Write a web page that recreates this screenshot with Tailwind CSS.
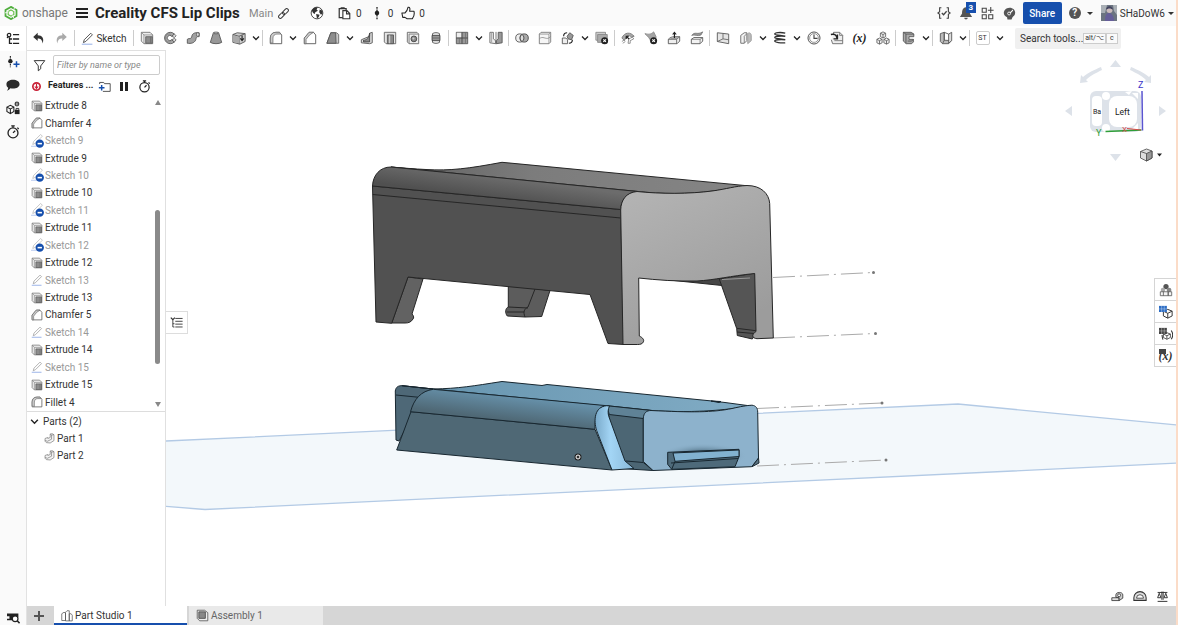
<!DOCTYPE html>
<html lang="en">
<head>
  <meta charset="utf-8">
  <title>Creality CFS Lip Clips | Part Studio 1</title>
  <script src="https://cdn.jsdelivr.net/npm/@tailwindcss/browser@4"></script>
</head>
<body class="h-screen flex flex-col overflow-hidden bg-white border-r-2 border-[#fbdcc8] font-['Roboto',sans-serif] text-[10px] text-[#333]">

  <!-- icon sprite, 16x16 grid -->
  <svg class="hidden" xmlns="http://www.w3.org/2000/svg">
    <defs>
      <g id="g-pencil" fill="none" stroke="currentColor"><path d="M3 13l1-3.500L12 1.500l2 2L6 11.500z"/><path d="M1 15h13" stroke="#7b9be0"/></g>
    </defs>
    <symbol id="chev" viewBox="0 0 16 16"><path d="M2 5l6 6 6-6" fill="none" stroke="#222" stroke-width="2.500"/></symbol>
    <symbol id="undo" viewBox="0 0 16 16"><path d="M7 1L1.500 6 7 11V8c3.500 0 5.500 1.500 6 6C15.500 8 12.500 4 7 4z" fill="#333"/></symbol>
    <symbol id="redo" viewBox="0 0 16 16"><path d="M9 1l5.500 5L9 11V8c-3.500 0-5.500 1.500-6 6C.5 8 3.500 4 9 4z" fill="#aaa"/></symbol>
    <symbol id="sketch" viewBox="0 0 16 16"><use href="#g-pencil"/></symbol>
    <symbol id="suppressed" viewBox="0 0 16 16"><g opacity=".6"><use href="#g-pencil" x="-1" y="-1"/></g><circle cx="10" cy="11" r="4.800" fill="#164fad"/><path d="M7.500 11h5" stroke="#fff" stroke-width="1.800"/></symbol>
    <symbol id="extrude" viewBox="0 0 16 16"><g stroke-width=".9"><path d="M1.500 1.500h10l3 3v10h-10l-3-3z" fill="#eee" stroke="#666"/><path d="M1.500 1.500l3 3h10M4.500 4.500v10" fill="none" stroke="#888"/><path d="M6.500 6.500h7.500v7.500H6.500z" fill="#8c8c8c" stroke="#555"/><path d="M12 6.500V14" fill="none" stroke="#6c6c6c"/></g></symbol>
    <symbol id="revolve" viewBox="0 0 16 16"><path d="M13 3.500A6.500 6.500 0 1 0 13 12.500L10 10A3 3 0 1 1 10 6z" fill="#aaa" stroke="#555"/><path d="M10 6l3-2.500 2 2L13 7.500zM10 10l3-1.500 2 1.500-2 2.500z" fill="#ddd" stroke="#444" stroke-width=".8"/><circle cx="7.500" cy="8" r="4.600" fill="none" stroke="#777" stroke-width=".7" stroke-dasharray="18 11" stroke-dashoffset="-5"/></symbol>
    <symbol id="sweep" viewBox="0 0 16 16"><path d="M1.500 9.500C4 7.500 5 10 6.500 7 7 3 9 1.500 15 2v4.500c-4-.5-3 1.500-4 4C9 14 6 14.500 1.500 14z" fill="#a2a2a2" stroke="#555"/><ellipse cx="13.500" cy="4" rx="1.500" ry="2.300" fill="#ddd" stroke="#444" stroke-width=".7"/></symbol>
    <symbol id="loft" viewBox="0 0 16 16"><path d="M5 2h6l3.500 11c-3 2-10 2-13 0z" fill="#989898" stroke="#555"/><ellipse cx="8" cy="2.200" rx="3" ry="1" fill="#ddd" stroke="#444" stroke-width=".8"/></symbol>
    <symbol id="thicken" viewBox="0 0 16 16"><path d="M1 4l5-2 9 1v9l-6 3-8-2z" fill="#ccc" stroke="#555"/><path d="M1 4l7 2v9M8 6l7-3" fill="none" stroke="#555"/><path d="M1.500 5L8 6.500V14l-6.500-1.500z" fill="#aaa"/><path d="M11.500 5v5M9.500 8.500l2 2.500 2-2.500" fill="none" stroke="#222" stroke-width="1.300"/></symbol>
    <symbol id="fillet" viewBox="0 0 16 16"><path d="M1.500 14.500V8C1.500 4 4 1.500 8 1.500h4l2.500 3v10z" fill="#fff" stroke="#555"/><path d="M1.500 8C1.500 4 4 1.500 8 1.500h4l1.500 2H9C6.500 3.500 4.500 5.500 4.500 8v6l-3-.5z" fill="#ccc" stroke="#666" stroke-width=".8"/></symbol>
    <symbol id="chamfer" viewBox="0 0 16 16"><path d="M1.500 14.500V8l5.500-6.500h5l2.500 3v10z" fill="#fff" stroke="#555"/><path d="M1.500 8L7 1.500h5L7.500 4.500 3.500 9.500v5h-2z" fill="#ccc" stroke="#666" stroke-width=".8"/></symbol>
    <symbol id="draft" viewBox="0 0 16 16"><path d="M1 14L5.500 2H12l2.500 2v10z" fill="#ccc" stroke="#666"/><path d="M1 14L5.500 2H11l.5 12z" fill="#8d8d8d" stroke="#555"/></symbol>
    <symbol id="rib" viewBox="0 0 16 16"><path d="M1.500 10L11 6V2.500l3 -1v12L11 14.500l-9.500-1z" fill="#ddd" stroke="#555"/><path d="M4 10.500c4 0 6-3 7-8v10H4z" fill="#888" stroke="#444"/></symbol>
    <symbol id="shell" viewBox="0 0 16 16"><path d="M1.500 1.500h13v13h-11l-2-2z" fill="#e5e5e5" stroke="#666"/><path d="M5 4.500h7v10H5z" fill="#888" stroke="#555"/><path d="M7.500 5v9" stroke="#ccc" stroke-width="1.500"/></symbol>
    <symbol id="hole" viewBox="0 0 16 16"><path d="M1.500 1.500h11l2 2v11h-11l-2-2z" fill="#eee" stroke="#666"/><path d="M3.500 14.500v-11h11" fill="none" stroke="#777"/><circle cx="9" cy="9" r="3.300" fill="#8a8a8a" stroke="#444"/><circle cx="8.500" cy="8.500" r="1.200" fill="#ccc"/></symbol>
    <symbol id="thread" viewBox="0 0 16 16"><path d="M4 3c2-1.500 6-1.500 8 0v10c-2 1.500-6 1.500-8 0z" fill="#eee" stroke="#555"/><path d="M3.500 5h9v6h-9z" fill="#999" stroke="#444"/><path d="M3.500 8h9" stroke="#666"/></symbol>
    <symbol id="pattern" viewBox="0 0 16 16"><path d="M1.500 1.500h13v13h-13z" fill="#999" stroke="#555"/><path d="M2 2h5.500v5.500H2z" fill="#eee"/><path d="M8 1.500v13M1.500 8h13" stroke="#444"/><path d="M12 2v12M5 8v6" stroke="#666" stroke-width=".7"/></symbol>
    <symbol id="mirror" viewBox="0 0 16 16"><path d="M1 1.500h4V9l2.500 2v3.500L1 13.500z" fill="#eee" stroke="#666"/><path d="M3 2v11" stroke="#999"/><path d="M15 1.500h-4.500V9l-2 2v3.500l6.500-1z" fill="#999" stroke="#555"/><path d="M8 1v14" stroke="#666"/></symbol>
    <symbol id="boolean" viewBox="0 0 16 16"><circle cx="5.500" cy="8" r="4.700" fill="#eee" stroke="#555"/><circle cx="10.500" cy="8" r="4.700" fill="#aaa" stroke="#444"/><path d="M8 4a4.700 4.700 0 0 1 0 8 4.700 4.700 0 0 1 0-8z" fill="#ddd" stroke="#444"/></symbol>
    <symbol id="split" viewBox="0 0 16 16"><g stroke-width=".9"><path d="M1.500 3.500l2-2h11v11l-2 2h-11z" fill="#f6f6f6" stroke="#666"/><path d="M1.500 9c4-4 7 1 11-1l2-2M1.500 3.500h11v11M12.500 3.500l2-2" fill="none" stroke="#888"/></g></symbol>
    <symbol id="transform" viewBox="0 0 16 16"><path d="M1.500 8h4l2 2v4.500h-6z" fill="#eee" stroke="#555"/><path d="M7 6l3-4 4 3-2 5-4-1z" fill="#999" stroke="#555"/><path d="M3 6c0-3 2-4 4-4M13 10c0 3-2 4-4 4" fill="none" stroke="#222" stroke-width="1.300"/></symbol>
    <symbol id="delpart" viewBox="0 0 16 16"><path d="M1 1.500h11v9H1z" fill="#ccc" stroke="#888"/><path d="M3 4h11v9H3z" fill="#aaa" stroke="#888"/><circle cx="11" cy="11" r="4" fill="#222"/><path d="M9.500 9.500l3 3m0-3l-3 3" stroke="#fff" stroke-width="1.200"/></symbol>
    <symbol id="modfillet" viewBox="0 0 16 16"><path d="M1 8C4 1 11 1 15 6l-3 1C9 4 6 5 4 11z" fill="#aaa" stroke="#777"/><path d="M6 6l4 4M6 9V6h3" fill="none" stroke="#222" stroke-width="1.300"/><path d="M9 9l4-2 1.500 2-4 2v3L8 14z" fill="#fff" stroke="#666" stroke-width=".8"/><path d="M1 12l3-2M2 14l3-2" stroke="#888"/></symbol>
    <symbol id="delface" viewBox="0 0 16 16"><path d="M1 3c4 1 7 1 10-2l3 6-6 6C7 8 4 6 1 3z" fill="#a5a5a5" stroke="#888"/><circle cx="11" cy="11" r="4" fill="#222"/><path d="M9.500 9.500l3 3m0-3l-3 3" stroke="#fff" stroke-width="1.200"/></symbol>
    <symbol id="moveface" viewBox="0 0 16 16"><path d="M1.500 9.500c2-2 4-3 7-3h6v5l-3 3h-10z" fill="#eee" stroke="#555"/><path d="M1.500 9.500H11l3.500-3M11 9.500v5" fill="none" stroke="#666"/><path d="M3 9c2-2 5-2 10-2l-2 2z" fill="#999"/><path d="M8.500 8V2M6.500 4l2-2.500 2 2.500" fill="none" stroke="#222" stroke-width="1.300"/></symbol>
    <symbol id="replace" viewBox="0 0 16 16"><path d="M1.500 9.500l3-2h10v4l-3 3h-10z" fill="#f2f2f2" stroke="#555"/><path d="M1.500 9.500h10l3-2M11.500 9.500v5" fill="none" stroke="#666" stroke-width=".8"/><path d="M2 5c4-5 6 0 12.500-4l-2 3.500c-4 2-7-1-10.500.5z" fill="#999" stroke="#777"/></symbol>
    <symbol id="plane" viewBox="0 0 16 16"><path d="M1.500 2l13 1.500v11L1.500 12z" fill="#e5e5e5" stroke="#555"/><path d="M8 3v6l6.500 1M8 9l-6.500 3" fill="none" stroke="#666"/></symbol>
    <symbol id="surface" viewBox="0 0 16 16"><path d="M2 14V5l4-3h3v9l-3 3z" fill="#f2f2f2" stroke="#666"/><path d="M6 14V6l3-3" fill="none" stroke="#777"/><path d="M10 3c2-2 4 0 4 2v6l-4 3.500z" fill="#bbb" stroke="#999"/></symbol>
    <symbol id="helix" viewBox="0 0 16 16"><path d="M14 2.500C8 1 2 2 2 3.500S10 5 14 6C8 5.500 2 6 2 7.500S10 9 14 10C8 9.500 2 10 2 11.500S9 14 14 13.500" fill="none" stroke="#333" stroke-width="1.500"/></symbol>
    <symbol id="clock" viewBox="0 0 16 16"><circle cx="8" cy="8" r="6.900" fill="#eee" stroke="#444"/><circle cx="8" cy="8" r="5" fill="#fff" stroke="#777" stroke-width=".8"/><path d="M8 4v4.500h4" fill="none" stroke="#444" stroke-width="1.300"/></symbol>
    <symbol id="import" viewBox="0 0 16 16"><path d="M4 4V1.500h7L14.500 5v9.500H3L1.500 10" fill="#eee" stroke="#666"/><path d="M11 1.500V5h3.500M5 11h9.500" fill="none" stroke="#777"/><path d="M1 4c4-1 6 0 7 4M8.500 4v5H4" fill="none" stroke="#222" stroke-width="1.600"/></symbol>
    <symbol id="cubes" viewBox="0 0 16 16"><g fill="#eee" stroke="#555" stroke-width=".9"><path id="cb" d="M8 1l3 1.500v4L8 8 5 6.500v-4zM5 2.500L8 4l3-1.500M8 4v4"/><use href="#cb" x="-4" y="7"/><use href="#cb" x="4" y="7"/></g></symbol>
    <symbol id="frame" viewBox="0 0 16 16"><path d="M1.500 1.500h9l3 2v3H8v3h5v3l-2 2H5l-3.500-3z" fill="#aaa" stroke="#555"/><path d="M1.500 1.500l3 2h9M4.500 3.500v11M13 9.500l-2 2H6.500" fill="none" stroke="#555"/></symbol>
    <symbol id="sheet" viewBox="0 0 16 16"><path d="M1.500 3L6 1.500v9l8 .5-3 3.500H4L1.500 12z" fill="#bbb" stroke="#555"/><path d="M6 1.500l5 2 3.500-2V11L11 14V3.500" fill="#ddd" stroke="#555"/><path d="M6 1.500v9l-2 4" fill="none" stroke="#555"/></symbol>
    <symbol id="tree" viewBox="0 0 16 16"><path d="M8 3h7M8 8h7M8 13h7M4 6v7h3M4 8h3" fill="none" stroke="#222" stroke-width="1.500"/><circle cx="3.500" cy="3.500" r="2" fill="none" stroke="#222" stroke-width="1.400"/><circle cx="1.800" cy="6" r="1" fill="#222"/></symbol>
    <symbol id="addver" viewBox="0 0 16 16"><path d="M5 1v13" stroke="#222" stroke-width="1.300" stroke-dasharray="2 1"/><circle cx="5" cy="7" r="2.500" fill="#222"/><path d="M12 7v7M8.500 10.500h7" stroke="#164fad" stroke-width="1.700"/></symbol>
    <symbol id="comment" viewBox="0 0 16 16"><path d="M8 2c4 0 7.500 2 7.500 5S12 12 8 12c-1 0-2 0-3-.3C4 13 3 14 1 14.500c1-1 1.500-2.500 1.500-3.500C1 10 .5 8.500.5 7 .5 4 4 2 8 2z" fill="#2b2b2b"/></symbol>
    <symbol id="config" viewBox="0 0 16 16"><path d="M1 7l4-2 4 2v5l-4 2.500L1 12zM1 7l4 2 4-2M5 9v5.500" fill="none" stroke="#222" stroke-width="1.200"/><circle cx="12.500" cy="3.500" r="2.800" fill="#444"/><path d="M12.500 2v3" stroke="#fff"/><path d="M10 10h5.500v5H10z" fill="#222"/><path d="M11.500 10V8.500h3V10" fill="none" stroke="#222"/></symbol>
    <symbol id="stopwatch" viewBox="0 0 16 16"><circle cx="8" cy="9" r="5.700" fill="none" stroke="#222" stroke-width="1.500"/><path d="M6 1h4M8 1v2M13 3l1.500 1.500M8 9l2.500-2.500" stroke="#222" stroke-width="1.500"/></symbol>
    <symbol id="funnel" viewBox="0 0 16 16"><path d="M1.500 2h13L9.500 8.500V12L6.500 14.500v-6z" fill="none" stroke="#333" stroke-width="1.200"/></symbol>
    <symbol id="folder" viewBox="0 0 16 16"><path d="M2 5V3h5l1 1.500h7V14H6" fill="none" stroke="#444" stroke-width="1.100"/><path d="M4.500 6v7M1 9.500h7" stroke="#164fad" stroke-width="1.800"/></symbol>
    <symbol id="part" viewBox="0 0 16 16"><path d="M1.500 8l4-1.500V8L9 6.500v-5l3-.5 2.500 1.500V11L9 14.500l-5.500-.5-2-2z" fill="#f5f5f5" stroke="#777"/><path d="M9 1.500l2 1.500v6L5 12l-3.500-1M11 3l3.500-.5" fill="none" stroke="#777"/></symbol>
    <symbol id="link" viewBox="0 0 16 16"><g fill="none" stroke="#333" stroke-width="1.400" transform="rotate(-45 8 8)"><rect x="-1" y="5.500" width="10" height="5" rx="2.500"/><rect x="7" y="5.500" width="10" height="5" rx="2.500"/></g></symbol>
    <symbol id="globe" viewBox="0 0 16 16"><circle cx="8" cy="8" r="6.700" fill="#fff" stroke="#333"/><path d="M2 5c2-3 4-4 7-3.500L7.500 4 9 5.500 6 7 5.500 9 3.500 8zM7 9l4 1-1 2.500L8 14.500zM11 4l3 1 .5 3.500L12.500 10 10.500 7z" fill="#333"/></symbol>
    <symbol id="copydoc" viewBox="0 0 16 16"><path d="M6 13H1.500V2H10v2M4 2V1h3.500v1" fill="none" stroke="#333" stroke-width="1.500"/><path d="M6 4.500h5L14.500 8v6.500H6zM10.500 5v3.500h4" fill="#fff" stroke="#333" stroke-width="1.400"/></symbol>
    <symbol id="version" viewBox="0 0 16 16"><path d="M8 1v14" stroke="#222" stroke-width="1.500" stroke-dasharray="2 1"/><circle cx="8" cy="8" r="2.600" fill="#222"/></symbol>
    <symbol id="thumb" viewBox="0 0 16 16"><path d="M1 8h3.500C7 6 7.500 4 8 1.500c2.500-.5 2.500 2 1.800 4.500h5c.8 3-.3 6.500-1.800 8.500H7L4.500 13H2z" fill="none" stroke="#222" stroke-width="1.200" stroke-linejoin="round"/></symbol>
    <symbol id="braces" viewBox="0 0 16 16"><path d="M5 2H3v4.500L1 8l2 1.500V14h2M11 2h2v4.500L15 8l-2 1.500V14h-2" fill="none" stroke="#444" stroke-width="1.300"/><path d="M5.500 8l2 2 3.500-4" fill="none" stroke="#444" stroke-width="1.400"/></symbol>
    <symbol id="bell" viewBox="0 0 16 16"><path d="M8 1.500c4 .5 4.500 4 4.500 7L15 12.500H1L3.500 8.500c0-3 .5-6.500 4.500-7zM6 13.500h4c0 2.500-4 2.500-4 0z" fill="#555"/></symbol>
    <symbol id="apps" viewBox="0 0 16 16"><path d="M1.500 1.500h5v5h-5zM1.500 9.500h5v5h-5zM9.500 9.500h5v5h-5zM12 0v7.500M8.500 4h7" fill="none" stroke="#444" stroke-width="1.300"/></symbol>
    <symbol id="learn" viewBox="0 0 16 16"><path d="M8 1c4.500 0 7 3 7 6.200S12.500 11.500 11.500 13L10.500 15.500H5.500L5 12.500C2 11.500 1 9.500 1 7.200S3.500 1 8 1z" fill="#555"/><path d="M8 7l4-4 .5 1.500L9 8z" fill="#fff"/><circle cx="7.500" cy="8" r="1.800" fill="none" stroke="#fff"/></symbol>
    <symbol id="panel" viewBox="0 0 16 16"><path d="M6.500 3h9M6.500 6.500h9M6.500 10h9M6.500 13.500h9M3.500 5v8.500h2M3.500 9.500h2" fill="none" stroke="#333" stroke-width="1.100"/><path d="M1 2l2.500 2.500L6 2" fill="none" stroke="#333" stroke-width="1.500"/></symbol>
    <symbol id="appear" viewBox="0 0 16 16"><circle cx="8" cy="4" r="3" fill="#555"/><circle cx="4.500" cy="8" r="2.500" fill="#aaa"/><circle cx="11.500" cy="8" r="2.700" fill="#888"/><path d="M1.500 10h9v4.500h-9zM10.500 10h4v4.500h-4zM5 10v4.500" fill="#f4f4f4" stroke="#555" stroke-width=".9"/></symbol>
    <symbol id="cubecfg" viewBox="0 0 16 16"><path d="M5 7l5-2 5 2v5.500L10 15l-5-2.500zM5 7l5 2.500L15 7M10 9.500V15" fill="#fff" stroke="#333" stroke-width="1.100"/><path d="M0 1h9v7H0z" fill="currentColor"/><path d="M0 4.500h9M3 1v7M6 1v7" stroke="#fff" stroke-width=".4"/></symbol>
    <symbol id="cubeparen" viewBox="0 0 16 16"><path d="M5 8l4-1.500L13 8v4l-4 2-4-2zM5 8l4 2 4-2M9 10v4" fill="#fff" stroke="#444"/><path d="M14 4c2 3 2 7 0 10M3.500 9c0 2 .5 4 1 5.500" fill="none" stroke="#333" stroke-width="1.200"/><path d="M0 1h9v7H0z" fill="#444"/><path d="M0 4.500h9M3 1v7M6 1v7" stroke="#fff" stroke-width=".4"/></symbol>
    <symbol id="tape" viewBox="0 0 16 16"><path d="M1 9.500h9V13H1z" fill="#ddd" stroke="#333"/><path d="M6 9V6c0-4 8.500-4 8.500 0v4L10 13V9.500z" fill="#ccc" stroke="#333"/><circle cx="10" cy="6.500" r="1.800" fill="#fff" stroke="#333"/></symbol>
    <symbol id="protractor" viewBox="0 0 16 16"><path d="M1 13V10a7 7 0 0 1 14 0v3z" fill="#ddd" stroke="#333" stroke-width="1.200"/><path d="M4 10.500a4 4 0 0 1 8 0z" fill="#fff" stroke="#444"/></symbol>
    <symbol id="scale" viewBox="0 0 16 16"><path d="M2 3h12M7.200 2v10M8.800 2v10M2 14h12M2 9.500L4 4l2 5.500zM10 9.500L12 4l2 5.500z" fill="none" stroke="#333" stroke-width="1.200"/></symbol>
    <symbol id="camera" viewBox="0 0 16 16"><path d="M0 3h14v4.500a5 5 0 0 0-7.500 4H0v-2h3v-3H0z" fill="#222"/><circle cx="10" cy="9.500" r="3.500" fill="#fff" stroke="#222" stroke-width="1.500"/><path d="M12.500 12l3 3" stroke="#222" stroke-width="2"/></symbol>
    <symbol id="studio" viewBox="0 0 16 16"><path d="M1 5l3-2 2 1v10H1zM6 3l2-2h3v13.500H6zM11 5h2.500L15 7v7.500h-4z" fill="#fff" stroke="#555"/></symbol>
    <symbol id="assembly" viewBox="0 0 16 16"><path d="M1.500 1.500h9l4 3v10h-10l-3-3z" fill="#eee" stroke="#555"/><path d="M3.500 3.500h8v8h-8z" fill="#888" stroke="#444"/></symbol>
  </svg>

  <header class="h-[26px] shrink-0 flex items-center bg-[#fafafa] pl-1 pr-[2px]">
    <a href="#" class="flex items-center gap-1 text-[#777] text-[12px] leading-none">
      <svg class="size-[14px]" viewBox="0 0 16 16"><path d="M8 1l6.300 3.500v7L8 15l-6.300-3.500v-7z" fill="none" stroke="#4fae3c" stroke-width="2"/><path d="M8 4.500l3.200 1.800v3.500L8 11.600 4.800 9.800V6.300z" fill="none" stroke="#6abf4b" stroke-width="1.300"/><path d="M1 8l4-1.500M12 1.500l-1 4M11 14l-1-4" stroke="#fafafa" stroke-width="1"/></svg>
      <span class="w-[50px]">onshape</span>
    </a>
    <button aria-label="Menu" class="w-3 flex flex-col gap-[2px] ml-1">
      <span class="h-[2px] w-full bg-[#222]"></span><span class="h-[2px] w-full bg-[#222]"></span><span class="h-[2px] w-full bg-[#222]"></span>
    </button>
    <h1 class="ml-[7px] w-[149px] whitespace-nowrap text-[15px] leading-5 font-bold text-[#222]">Creality CFS Lip Clips</h1>
    <span class="ml-[5px] w-6 pt-[2px] text-[11px] text-[#888]">Main</span>
    <button aria-label="Copy link" class="ml-[5px]"><svg class="size-[11px]"><use href="#link"/></svg></button>
    <svg class="ml-[21px] size-[14px]"><use href="#globe"/></svg>
    <div class="ml-[14px] flex items-center gap-[5px]"><svg class="size-[13px]"><use href="#copydoc"/></svg><span>0</span></div>
    <div class="ml-2 flex items-center gap-1"><svg class="size-[14px]"><use href="#version"/></svg><span>0</span></div>
    <div class="ml-2 flex items-center gap-1"><svg class="size-[14px]"><use href="#thumb"/></svg><span>0</span></div>

    <div class="ml-auto flex items-center">
      <button aria-label="Tasks" class="w-[22px] flex justify-center"><svg class="size-[14px]"><use href="#braces"/></svg></button>
      <button aria-label="Notifications" class="relative w-[22px] flex justify-center"><svg class="size-[14px]"><use href="#bell"/></svg><span class="absolute -top-[4px] left-[11px] w-[10px] h-[11px] bg-[#164fad] text-white text-[8px] leading-[11px] font-bold">3</span></button>
      <button aria-label="Apps" class="w-[22px] flex justify-center"><svg class="size-[13px]"><use href="#apps"/></svg></button>
      <button aria-label="Learning center" class="w-[22px] flex justify-center"><svg class="size-[13px]"><use href="#learn"/></svg></button>
      <button class="ml-[2px] w-[39px] h-[22px] rounded-xs bg-[#164fad] text-white font-medium">Share</button>
      <button aria-label="Help" class="ml-[7px] flex items-center gap-[6px]"><span class="size-3 rounded-full bg-[#555] text-white text-[10px] leading-3 font-bold">?</span><span class="border-x-[3px] border-x-transparent border-t-[3px] border-t-[#333]"></span></button>
      <button class="ml-2 flex items-center">
        <svg class="w-4 h-4" viewBox="0 0 16 16"><path d="M0 0h16v16H0z" fill="#6b7480"/><path d="M0 0h6l-2 8H0zM12 0h4v10l-3-4z" fill="#a9afb5"/><path d="M4 16c0-5 1-8 4-8s5 4 5 8z" fill="#665f99"/><circle cx="8.500" cy="5" r="3" fill="#cbbcbc"/><path d="M5 5c0-5 7-5 7 0-2-2-5-2-7 0z" fill="#42435e"/></svg>
        <span class="ml-[3px] text-left">SHaDoW6</span>
        <span class="ml-[3px] border-x-[3px] border-x-transparent border-t-[3px] border-t-[#333]"></span>
      </button>
    </div>
  </header>

  <div class="flex-1 min-h-0 flex">
    <nav class="w-[27px] shrink-0 flex flex-col items-center bg-[#fafafa] border-r border-[#e2e2e2]">
      <button aria-label="Feature list" class="w-full h-[25px] flex items-center justify-center bg-white"><svg class="size-[14px]"><use href="#tree"/></svg></button>
      <button aria-label="Versions" class="h-[22px]"><svg class="size-[14px]"><use href="#addver"/></svg></button>
      <button aria-label="Comments" class="h-[23px]"><svg class="size-[14px]"><use href="#comment"/></svg></button>
      <button aria-label="Configurations" class="h-6"><svg class="size-[14px]"><use href="#config"/></svg></button>
      <button aria-label="History" class="h-[23px]"><svg class="size-[14px]"><use href="#stopwatch"/></svg></button>
      <button aria-label="Search tabs" class="mt-auto mb-[1px]"><svg class="size-[13px]"><use href="#camera"/></svg></button>
    </nav>

    <div class="flex-1 min-w-0 flex flex-col">
      <div id="toolbar" class="h-6 shrink-0 flex items-center">
        <button aria-label="Undo" class="w-[23px] flex justify-center"><svg class="size-[13px]"><use href="#undo"/></svg></button>
        <button aria-label="Redo" class="w-[23px] flex justify-center"><svg class="size-[13px]"><use href="#redo"/></svg></button>
        <span class="w-px mx-px h-4 bg-[#ccc]"></span>
        <button class="w-14 flex items-center justify-center gap-[2px] whitespace-nowrap"><svg class="size-[13px]"><use href="#sketch"/></svg>Sketch</button>
        <span class="w-px mx-px h-4 bg-[#ccc]"></span>
        <div id="tools" class="flex items-center"></div>
        <button class="ml-[10px] w-[106px] h-[21px] flex items-center rounded-xs bg-[#f0f0f0] pl-[5px] whitespace-nowrap">Search tools...
          <span class="flex text-[7px] leading-[9px]"><kbd class="font-['Roboto',sans-serif] px-px border border-[#ccc] bg-[#fafafa]">alt/⌥</kbd><kbd class="font-['Roboto',sans-serif] px-[3px] border border-[#ccc] bg-[#fafafa]">c</kbd></span>
        </button>
      </div>

      <div class="flex-1 min-h-0 flex">
        <aside class="w-[139px] shrink-0 flex flex-col border-r border-t border-[#e0e0e0]">
          <div class="flex items-center pt-1 pl-[6px] pr-[5px]">
            <svg class="size-[13px]"><use href="#funnel"/></svg>
            <input aria-label="Filter features" placeholder="Filter by name or type" class="ml-[7px] w-[107px] h-5 rounded-xs border border-[#ccc] px-[3px] text-[9px] italic placeholder:text-[#888]">
          </div>
          <div class="flex items-center h-[22px] pl-[5px]">
            <svg class="size-[9px]" viewBox="0 0 16 16"><circle cx="8" cy="8" r="6.500" fill="#fff" stroke="#c92036" stroke-width="3"/><path d="M8 3v8M5 8l3 3.500L11 8" fill="none" stroke="#c92036" stroke-width="2"/></svg>
            <h2 class="ml-[7px] w-[50px] text-[9px] font-bold text-[#222] whitespace-nowrap">Features ...</h2>
            <button aria-label="Add folder"><svg class="size-[13px]"><use href="#folder"/></svg></button>
            <button aria-label="Rollback" class="ml-[9px] w-2 h-[9px] border-x-[3px] border-[#222]"></button>
            <button aria-label="Regeneration time" class="ml-[10px]"><svg class="size-[13px]"><use href="#stopwatch"/></svg></button>
          </div>
          <div class="h-[315px] flex border-b border-[#ddd]">
            <ul id="features" class="flex-1 flex flex-col pl-1"></ul>
            <div class="w-[7px] mr-1 flex flex-col items-center pt-[3px] pb-1">
              <span class="border-x-[3px] border-x-transparent border-b-[5px] border-b-[#888]"></span>
              <span class="mt-[105px] w-[5px] h-[154px] rounded-full bg-[#8a8a8a]"></span>
              <span class="mt-auto border-x-[3px] border-x-transparent border-t-[5px] border-t-[#888]"></span>
            </div>
          </div>
          <button class="flex items-center h-[18px] gap-1 pl-[3px]"><svg class="size-[9px]"><use href="#chev"/></svg>Parts (2)</button>
          <ul>
            <li class="flex items-center h-[17px] pl-[17px] gap-[2px]"><svg class="size-[11px]"><use href="#part"/></svg>Part 1</li>
            <li class="flex items-center h-[17px] pl-[17px] gap-[2px]"><svg class="size-[11px]"><use href="#part"/></svg>Part 2</li>
          </ul>
        </aside>

        <main class="flex-1 min-w-0 relative">
          <svg class="absolute inset-0 w-full h-full" viewBox="166 50 1010 556">
            <defs>
              <linearGradient id="gt" x1="0" y1="0" x2="1" y2="0"><stop offset="0" stop-color="#606060"/><stop offset=".4" stop-color="#7c7c7c"/><stop offset="1" stop-color="#858585"/></linearGradient>
              <linearGradient id="gr" gradientUnits="userSpaceOnUse" x1="506" y1="178" x2="503" y2="200"><stop offset="0" stop-color="#6c6c6c"/><stop offset="1" stop-color="#505050"/></linearGradient>
              <linearGradient id="gf" x1="0" y1="0" x2=".5" y2="1"><stop offset="0" stop-color="#b5b5b5"/><stop offset="1" stop-color="#9c9c9c"/></linearGradient>
              <linearGradient id="bt" x1="0" y1="0" x2="1" y2="0"><stop offset="0" stop-color="#6694ae"/><stop offset="1" stop-color="#81acc5"/></linearGradient>
              <linearGradient id="br" gradientUnits="userSpaceOnUse" x1="510" y1="396" x2="507" y2="420"><stop offset="0" stop-color="#6690a9"/><stop offset="1" stop-color="#4f6875"/></linearGradient>
              <linearGradient id="bl" x1="0" y1="0" x2="1" y2="0"><stop offset="0" stop-color="#79a9c9"/><stop offset=".4" stop-color="#a3d5f5"/><stop offset="1" stop-color="#88b8d8"/></linearGradient>
              <radialGradient id="bs"><stop offset=".4" stop-color="#5c7d92"/><stop offset="1" stop-color="#8db2cc" stop-opacity="0"/></radialGradient>
            </defs>
            <!-- work plane -->
            <path d="M160 441.300L958 404l222 21.300v37.700L205 509.500l-45-3.500" fill="#f3f8fb" stroke="#b3cae5" stroke-width="1.300"/>
            <!-- axes -->
            <g stroke="#aaa" stroke-dasharray="22 5 2 5" fill="none"><path d="M773 277.500l100-5M773 338l102-4.500M757 408.500l125-5.500M757 466l129-6"/></g>
            <g fill="#777"><circle cx="873.500" cy="272.500" r="1.500"/><circle cx="875.500" cy="333.500" r="1.500"/><circle cx="882" cy="403" r="1.500"/><circle cx="886" cy="460" r="1.500"/></g>

            <!-- upper clip -->
            <g stroke="#262626" stroke-linejoin="round">
              <path d="M408 277l15 2-11 35c2 2 2 4 1 5-2 3-4 4-8 4h-13.300z" fill="#626262"/>
              <path d="M508.300 285v22c-3 1-3.500 6-1 9l17.700 1 16.700-.5 8.300-26z" fill="#5c5c5c"/>
              <path d="M535 289l-7 18c-4 2-5 5-3 10M508.300 307l19.700 1M507 312h17" fill="none"/>
              <path d="M372.500 186l3.500 136 15.700 1.300L408 277l182 17.500 18 49 15.700 1-3-135z" fill="#515151"/>
              <path d="M391 167c12 1 24 2 35 2.500 24 1.500 43-1 76-7.200L746.700 185.700C720 190 690 197 638 191.500z" fill="url(#gt)"/>
              <path d="M372.500 186C373 175 380 167 391 167l247 24.500c-11 1-17 8-17.300 18z" fill="url(#gr)"/>
              <path d="M372.800 194.500L620.800 218" fill="none"/>
              <path d="M650 278l72 7.500 2-9z" fill="#464646"/>
              <path d="M719.300 279l36-6 2 58-5 8-15-3.500-.6-7z" fill="#555"/>
              <path d="M736.700 328.300l20 2.500M737 332l17 1.500" fill="none"/>
              <path d="M620.700 210C621 200 626 192.500 637 191.500 660 194 690 194 712 191c15-2 23-5 35-5.500 14 0 22 8 22.700 18L773.300 338l-16.300.7c-5-.5-6-4-1-7.200L754.700 273.500C730 276 715 280 697 281c-20 .5-40-1-58.300-3l.6 58c4 2 5 4 4 6-1 2-3 2.500-6 2.500h-14.300z" fill="url(#gf)"/>
              <path d="M722 279.500l28-1.500" stroke="#999"/>
            </g>

            <!-- lower clip -->
            <g stroke="#182730" stroke-linejoin="round">
              <path d="M395.300 391c.5-4 3-5.500 7-5.300L433 389l-12 10-22 42-3-1z" fill="#4e6877"/>
              <path d="M396 395l25 2.500" fill="none"/>
              <path d="M402 385.700l31 3.300c26-.5 40-3 69-7.500l40 4 5-1 165 16.500 13 1.500 26 3.500C720 411 690 413 650 410.500L433 389z" fill="url(#bt)"/>
              <path d="M711 401l10 .5-2 1z" fill="#182730"/>
              <path d="M606.700 405.700L652 410.500l-8.700 8v44l9.700 8-33-2z" fill="#4c6674"/>
              <path d="M606.700 405.700l45.300 4.800-8.700 8-34-4z" fill="#5f8296"/>
              <path d="M626 461l17.300 1.500" fill="none"/>
              <path d="M396.700 450L411 411.700 595 429.300 612 470z" fill="#4f6875"/>
              <path d="M410.500 411.700C414 399 421 391 433.300 389.300L606.700 405.700c-9 1-12 10-11.700 23.600z" fill="url(#br)"/>
              <path d="M606.700 405.700c-12 1-13.500 14-10 25l15.300 39.300 22-1.500-9-7.500L609 417c-1.500-4-1-8 .5-11z" fill="url(#bl)"/>
              <path d="M643.300 418c.5-5 3-7.500 7.700-7.500 40 2 62 2 81-2 9-2 14-3 20-3.300 4 .5 5.700 3 5.700 7l.8 46-6.800 8.500-98.700 3.800-9.700-9z" fill="#8db2cc"/>
              <ellipse cx="703" cy="456" rx="44" ry="13" fill="url(#bs)" stroke="none"/>
              <path d="M752 466.700l6.500-8.700.5 5z" fill="#5a7484"/>
              <path d="M667.700 452.300l71.300-3v7.400l-4 10-63.300 2.600-4-5z" fill="#4e6a7a"/>
              <path d="M673 453l66-3v6.500l-64 4.800z" fill="#82b2d0"/>
              <path d="M675 461.300l-3.300 8M671 463l67-4.500" fill="none"/>
            </g>
            <circle cx="578" cy="457" r="3.500" fill="#222"/><circle cx="578" cy="457" r="2" fill="#333" stroke="#fff"/>
          </svg>

          <button aria-label="Toggle list" class="absolute left-0 top-[261px] w-[22px] h-[23px] flex items-center justify-center bg-white border border-l-0 border-[#ddd]"><svg class="size-[13px]"><use href="#panel"/></svg></button>

          <!-- view cube -->
          <svg class="absolute right-2 top-[9px] w-[106px] h-[106px] font-['Roboto',sans-serif]" viewBox="1062 59 106 106">
            <g fill="#dde2e9">
              <path d="M1110 67l5.500-7 5.500 7zM1110 154h11l-5.500 7zM1072 106v10l-7-5zM1159 106v10l7-5z"/>
              <path d="M1080 83l1-8 2 2c6-5 11-7 18-10l1 3c-6 3-11 5-16 10l2 2zM1151 83l0-8-2 2c-6-5-11-7-18-10l-1 3c6 3 11 5 16 10l-2 2z"/>
              <rect x="1090" y="91" width="51" height="41" rx="6"/>
            </g>
            <g fill="#fff"><rect x="1092" y="96" width="10" height="30" rx="4"/><rect x="1109" y="96" width="28" height="31" rx="8"/><circle cx="1106" cy="96" r="4"/><circle cx="1106" cy="128" r="4"/><path d="M1125 92l4 3 3-4zM1132 93l6 6v-6zM1132 129l6-6v6z"/></g>
            <path d="M1141.500 130l-36 1.500" stroke="#2f9e38" stroke-width="1.500"/><path d="M1141 130l-14-1.500" stroke="#d94b4b"/><path d="M1142 91l.5 39.500" stroke="#5a55d0" stroke-width="1.500"/>
            <text x="1115" y="115" font-size="8.500" fill="#222">Left</text>
            <text x="1093" y="114" font-size="7" fill="#222">Ba</text>
            <text x="1138" y="88" font-size="9" fill="#3b36c9">Z</text>
            <text x="1096" y="136" font-size="9" fill="#2f9e38">Y</text>
            <text x="1122" y="132" font-size="8" fill="#d94b4b">X</text>
            <g stroke="#444" stroke-width=".8"><path d="M1140.500 151.500l6-2.500 5.500 2v7l-5.500 3-6-3z" fill="#ddd"/><path d="M1146.500 153.500l5.500-2.500v7l-5.500 3z" fill="#999"/><path d="M1140.500 151.500l6 2" fill="none"/></g>
            <path d="M1157 153.500h5l-2.500 3z" fill="#222"/>
          </svg>

          <div class="absolute right-0 top-[228px] w-[22px] flex flex-col border-l border-t border-[#d5d5d5] bg-white">
            <button aria-label="Appearance" class="h-[22px] flex items-center justify-center border-b border-[#d5d5d5]"><svg class="size-[14px]"><use href="#appear"/></svg></button>
            <button aria-label="Configuration" class="h-[22px] flex items-center justify-center border-b border-[#d5d5d5] text-[#2b6cc4]"><svg class="size-[14px]"><use href="#cubecfg"/></svg></button>
            <button aria-label="Tables" class="h-[22px] flex items-center justify-center border-b border-[#d5d5d5]"><svg class="size-[14px]"><use href="#cubeparen"/></svg></button>
            <button aria-label="Variables" class="relative h-[22px] flex items-center justify-center border-b border-[#d5d5d5] font-['Liberation_Serif',serif] font-bold italic text-[12px]">(x)<span class="absolute left-[4px] top-[4px] w-[7px] h-[5px] bg-[#444]"></span></button>
          </div>

          <div class="absolute right-[7px] bottom-[3px] flex gap-[9px]">
            <button aria-label="Measure"><svg class="size-[13px]"><use href="#tape"/></svg></button>
            <button aria-label="Angle"><svg class="size-[14px]"><use href="#protractor"/></svg></button>
            <button aria-label="Mass properties"><svg class="size-[13px]"><use href="#scale"/></svg></button>
          </div>
        </main>
      </div>

      <footer class="h-[19px] shrink-0 flex bg-[#d6d6d6]">
        <button aria-label="Add tab" class="w-[27px] flex items-center pl-[7px]"><svg class="size-[10px]" viewBox="0 0 10 10"><path d="M5 0v10M0 5h10" stroke="#555" stroke-width="2"/></svg></button>
        <button class="w-[133px] flex items-center gap-[2px] pl-[7px] pt-[2px] bg-white border-b-2 border-[#164fad]"><svg class="size-3"><use href="#studio"/></svg>Part Studio 1</button>
        <button class="ml-[2px] w-[134px] flex items-center gap-[2px] pl-[7px] bg-[#e9e9e9] text-[#666]"><svg class="size-[13px]"><use href="#assembly"/></svg>Assembly 1</button>
      </footer>
    </div>
  </div>

  <script>
    // '|' is a divider, 'v' is a drop-down arrow
    const tools = `extrude revolve sweep loft thicken v | fillet v chamfer draft v rib shell hole thread |
      pattern v mirror | boolean split transform v delpart | modfillet delface moveface replace |
      plane surface v helix v clock import (x) cubes | frame v | sheet v | ST v`.split(/\s+/);

    document.getElementById('tools').innerHTML = tools.map(t => {
      if (t === '|') return '<span class="w-px mx-px h-4 bg-[#ccc]"></span>';
      if (t === 'v') return '<button aria-label="More" class="w-[11px] flex justify-center"><svg class="size-[8px]"><use href="#chev"/></svg></button>';
      if (t === '(x)') return `<button class="w-[23px] font-['Liberation_Serif',serif] font-bold italic text-[12px] leading-4 text-[#222]">(x)</button>`;
      if (t === 'ST') return '<button class="w-[23px] flex justify-center"><span class="w-[14px] h-[14px] rounded-xs border border-[#ccc] text-[7px] leading-3">ST</span></button>';
      return `<button aria-label="${t}" class="w-[23px] flex justify-center"><svg class="size-[14px]"><use href="#${t}"/></svg></button>`;
    }).join('');

    const features = [
      ['extrude', 'Extrude 8'], ['chamfer', 'Chamfer 4'], ['suppressed', 'Sketch 9'], ['extrude', 'Extrude 9'],
      ['suppressed', 'Sketch 10'], ['extrude', 'Extrude 10'], ['suppressed', 'Sketch 11'], ['extrude', 'Extrude 11'],
      ['suppressed', 'Sketch 12'], ['extrude', 'Extrude 12'], ['sketch', 'Sketch 13'], ['extrude', 'Extrude 13'],
      ['chamfer', 'Chamfer 5'], ['sketch', 'Sketch 14'], ['extrude', 'Extrude 14'], ['sketch', 'Sketch 15'],
      ['extrude', 'Extrude 15'], ['fillet', 'Fillet 4'],
    ];

    document.getElementById('features').innerHTML = features.map(([icon, name]) => {
      const color = name.startsWith('Sketch') ? 'text-[#999]' : 'text-[#333]';
      const size = icon === 'suppressed' ? 'size-[14px]' : 'size-3 mr-[2px]';
      return `<li class="flex-1 min-h-0 flex items-center ${color}"><svg class="${size}"><use href="#${icon}"/></svg>${name}</li>`;
    }).join('');
  </script>
</body>
</html>
